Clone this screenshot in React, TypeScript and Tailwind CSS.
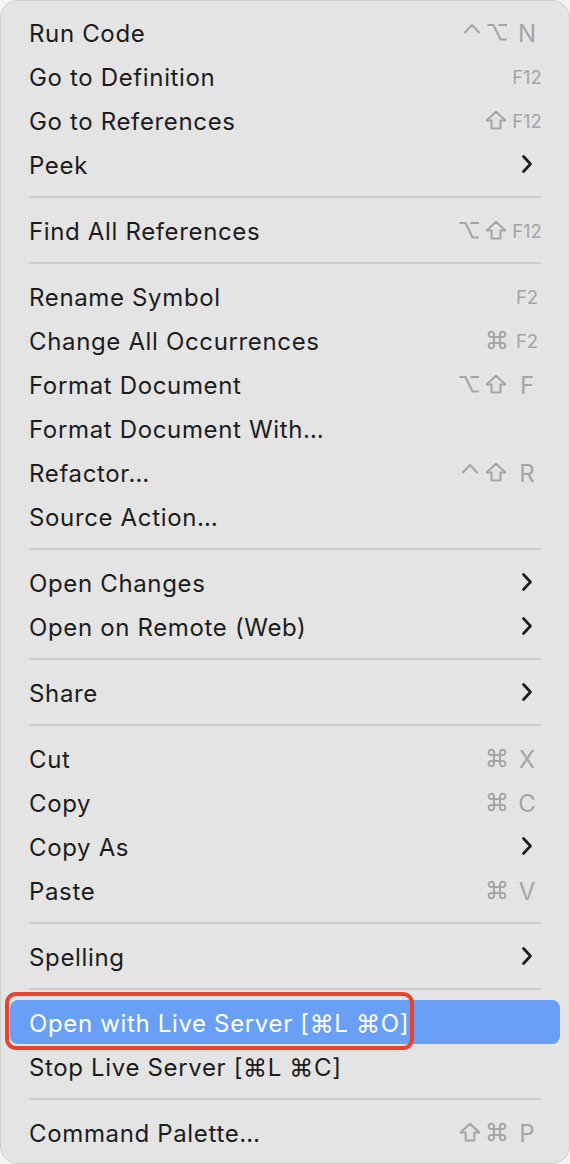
import React from "react";

type Mod = "ctrl" | "opt" | "shift" | "cmd";

type Row =
  | { sep: true }
  | {
      sep?: false;
      label: string;
      mods?: Mod[];
      k?: string;
      small?: boolean;
      sub?: boolean;
      active?: boolean;
    };

const rows: Row[] = [
  { label: "Run Code", mods: ["ctrl", "opt"], k: "N" },
  { label: "Go to Definition", k: "F12", small: true },
  { label: "Go to References", mods: ["shift"], k: "F12", small: true },
  { label: "Peek", sub: true },
  { sep: true },
  { label: "Find All References", mods: ["opt", "shift"], k: "F12", small: true },
  { sep: true },
  { label: "Rename Symbol", k: "F2", small: true },
  { label: "Change All Occurrences", mods: ["cmd"], k: "F2", small: true },
  { label: "Format Document", mods: ["opt", "shift"], k: "F" },
  { label: "Format Document With…" },
  { label: "Refactor…", mods: ["ctrl", "shift"], k: "R" },
  { label: "Source Action…" },
  { sep: true },
  { label: "Open Changes", sub: true },
  { label: "Open on Remote (Web)", sub: true },
  { sep: true },
  { label: "Share", sub: true },
  { sep: true },
  { label: "Cut", mods: ["cmd"], k: "X" },
  { label: "Copy", mods: ["cmd"], k: "C" },
  { label: "Copy As", sub: true },
  { label: "Paste", mods: ["cmd"], k: "V" },
  { sep: true },
  { label: "Spelling", sub: true },
  { sep: true },
  { label: "Open with Live Server [⌘L ⌘O]", active: true },
  { label: "Stop Live Server [⌘L ⌘C]" },
  { sep: true },
  { label: "Command Palette…", mods: ["shift", "cmd"], k: "P" },
];

const G = "#a5a5a5";

function ModIcon({ m }: { m: Mod }) {
  if (m === "ctrl")
    return (
      <svg width="18" height="20" viewBox="0 0 18 20" fill="none">
        <path d="M1.5 11 L9 3 L16.5 11" stroke={G} strokeWidth="2.1" strokeLinejoin="miter" />
      </svg>
    );
  if (m === "opt")
    return (
      <svg width="20" height="20" viewBox="0 0 20 20" fill="none">
        <path d="M0.5 3 H6.5 L13.5 17.5 H20" stroke={G} strokeWidth="2.1" />
        <path d="M11.5 3 H20" stroke={G} strokeWidth="2.1" />
      </svg>
    );
  if (m === "shift")
    return (
      <svg width="22" height="20" viewBox="0 0 22 20" fill="none">
        <path
          d="M11 1.8 L20.3 10.6 H15.4 V18.6 H6.6 V10.6 H1.7 Z"
          stroke={G}
          strokeWidth="2"
          strokeLinejoin="round"
        />
      </svg>
    );
  return (
    <svg width="20" height="20" viewBox="0 0 20 20" fill="none">
      <path
        d="M7 7V4.7A2.7 2.7 0 1 0 4.7 7H15.3A2.7 2.7 0 1 0 13 4.7V15.3A2.7 2.7 0 1 0 15.3 13H4.7A2.7 2.7 0 1 0 7 15.3Z"
        stroke={G}
        strokeWidth="2"
      />
    </svg>
  );
}

function Chevron() {
  return (
    <svg width="12" height="20" viewBox="0 0 12 20" fill="none">
      <path
        d="M2.5 2.5 L9.5 10 L2.5 17.5"
        stroke="#1c1c1c"
        strokeWidth="2.7"
        strokeLinecap="round"
        strokeLinejoin="round"
      />
    </svg>
  );
}

export default function App() {
  return (
    <div className="w-[570px] h-[1164px] bg-[#f3f3f3]">
      <div
        className="w-[570px] h-[1164px] rounded-[18px] border border-[#cfcfcf] bg-[#e4e4e4] px-[9px] py-[9px] flex flex-col"
        style={{ fontFamily: "Inter, 'Noto Sans', 'DejaVu Sans', sans-serif" }}
      >
        {rows.map((r, i) =>
          r.sep ? (
            <div key={i} className="h-[22px] shrink-0 flex items-center px-[19px]">
              <div className="h-[2px] w-full bg-[#cdcdcd]" />
            </div>
          ) : (
            <div
              key={i}
              className={
                "relative h-[44px] shrink-0 flex items-center pl-[19px] pr-[18px] rounded-[8px] " +
                (r.active ? "bg-[#6a9ff6] text-white" : "text-[#1c1c1c]")
              }
            >
              <span className="pt-[3px] text-[24px] leading-none tracking-[0.65px] whitespace-nowrap">
                {r.label}
              </span>
              <div className="ml-auto flex items-center">
                {r.mods && (
                  <div className="flex items-center gap-[6px] mr-[5px] mt-[-1px]">
                    {r.mods.map((m, j) => (
                      <ModIcon key={j} m={m} />
                    ))}
                  </div>
                )}
                {(r.k || r.sub) && (
                  <div className="w-[30px] flex justify-center items-center">
                    {r.sub ? (
                      <Chevron />
                    ) : (
                      <span
                        className={
                          "pt-[3px] text-[#a5a5a5] leading-none whitespace-nowrap " +
                          (r.small ? "text-[18.5px]" : "text-[24px]")
                        }
                      >
                        {r.k}
                      </span>
                    )}
                  </div>
                )}
              </div>
              {r.active && (
                <div className="absolute left-[-5px] top-[-8px] w-[409px] h-[58px] rounded-[11px] border-[4px] border-[#e8432c]" />
              )}
            </div>
          )
        )}
      </div>
    </div>
  );
}
